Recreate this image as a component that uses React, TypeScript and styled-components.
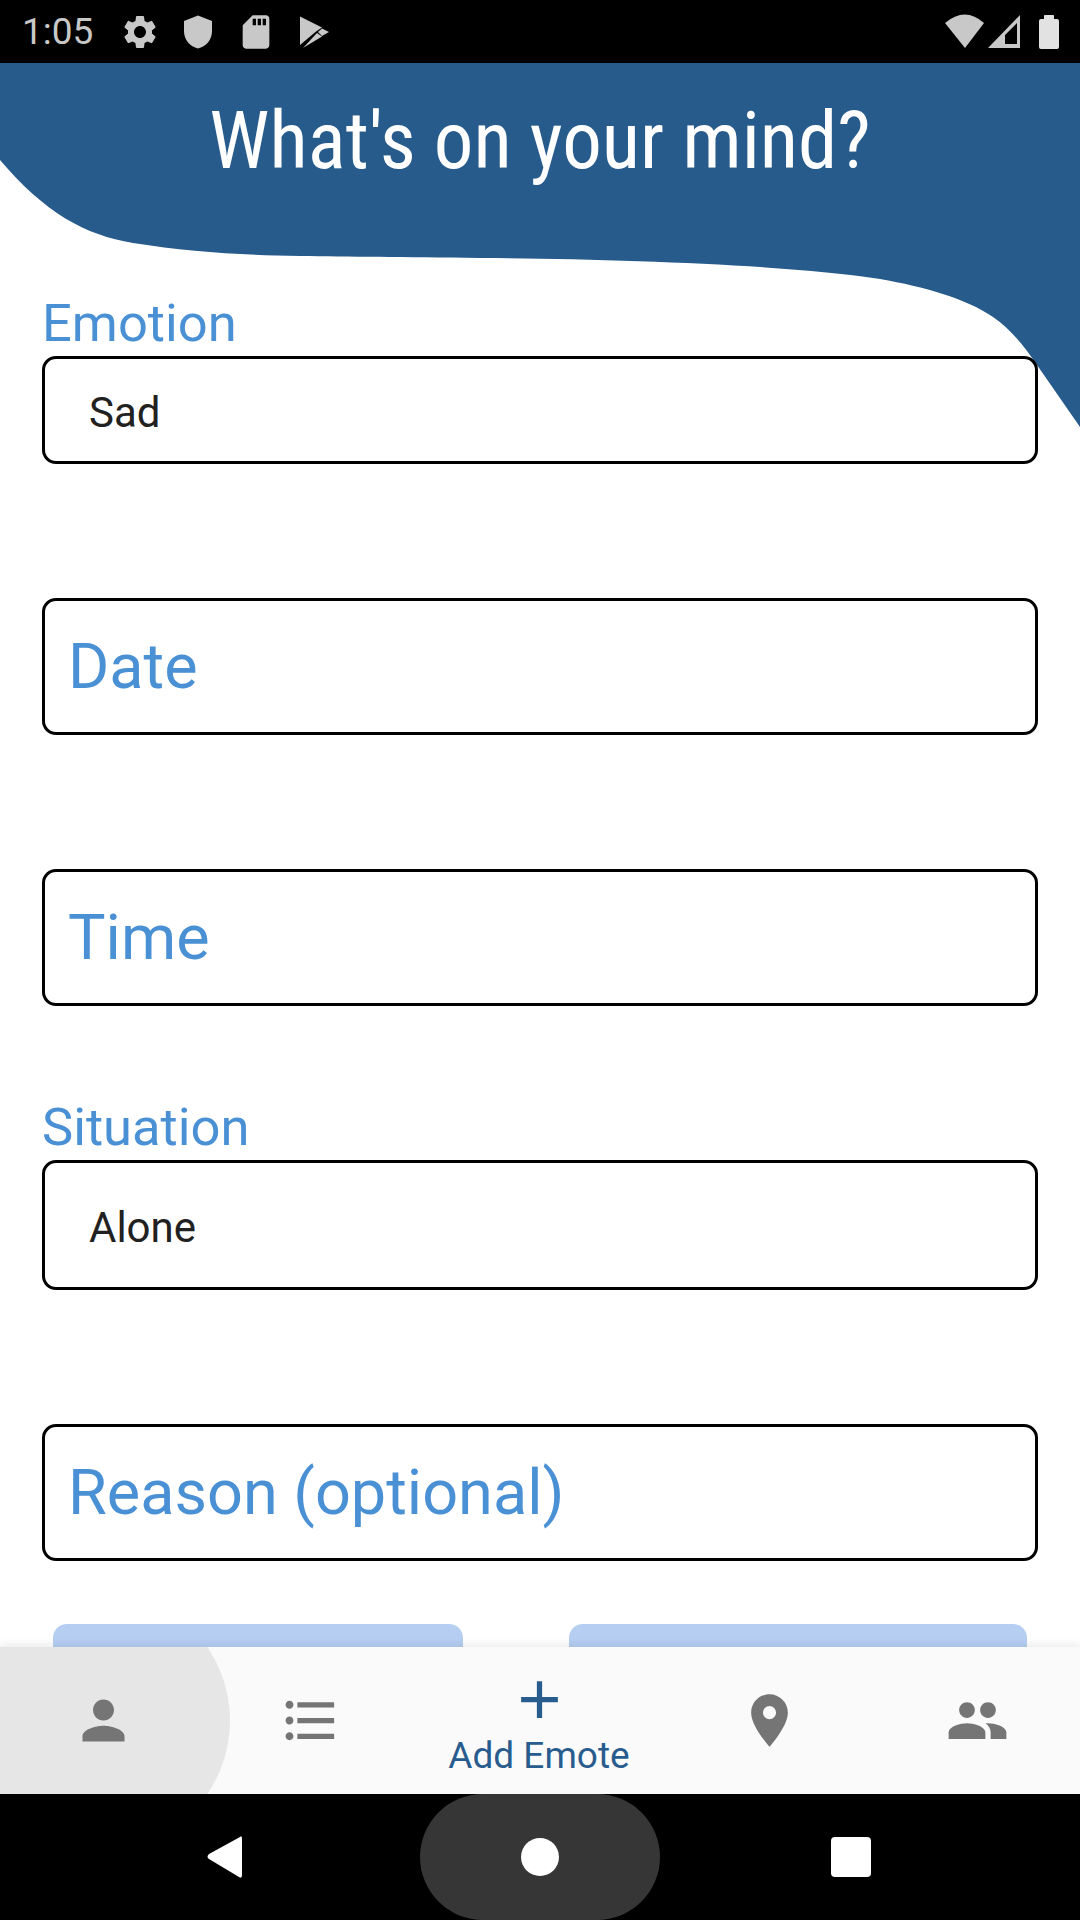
import React from 'react';
import styled, { createGlobalStyle } from 'styled-components';
import { MdAdd, MdFormatListBulleted, MdPeople, MdPerson, MdPlace, MdSdStorage, MdSettings } from 'react-icons/md';

const App: React.FC = () => {
  return (
    <Screen>
      <GlobalStyle />
      <StatusBar>
        <StatusLeft>
          <Clock>1:05</Clock>
          <MdSettings size={40} />
          <svg width="40" height="40" viewBox="0 0 40 40" fill="#c8c8c8">
            <path d="M20 3.5 L34 9 V19 C34 28 28 34.5 20 36.5 C12 34.5 6 28 6 19 V9 Z" />
          </svg>
          <MdSdStorage size={40} />
          <svg width="40" height="40" viewBox="0 0 40 40" fill="#c8c8c8">
            <path d="M6 4.5 L28 15.5 L22 19.5 L6 33 Z" />
            <path d="M28 16.5 L35 20 L28 24 L24 20 Z" />
            <path d="M9 36 L28 24.5 L23 21 Z" />
          </svg>
        </StatusLeft>
        <StatusRight>
          <svg width="115" height="36" viewBox="0 0 115 36">
            <path d="M0 9 Q20 -8 39 9 L20 34 Z" fill="#c8c8c8" />
            <path fillRule="evenodd" d="M43 34 L75 1 V34 Z M60 30 H72 V9 L60 21 Z" fill="#c8c8c8" />
            <path d="M99 1.5 Q99 1 100 1 H108 Q109 1 109 1.5 V5 H112 Q114 5 114 7 V33 Q114 35 112 35 H96 Q94 35 94 33 V7 Q94 5 96 5 H99 Z" fill="#e2e2e2" />
          </svg>
        </StatusRight>
      </StatusBar>

      <Content>
        <Wave viewBox="0 0 1080 370" preserveAspectRatio="none">
          <path d="M0 0 H1080 V364 L1037 302 C1022 280 1010 266 993 254 C965 235 925 224 880 216 C790 202 620 196 480 195 C400 194 350 194 300 193 C240 192 190 189 133 180 C85 172 45 150 0 97 Z" fill="#275b8c" />
        </Wave>
        <Title>What's on your mind?</Title>
        <Form>
          <Field>
            <Label>Emotion</Label>
            <Box $height={108}>
              <Value>Sad</Value>
            </Box>
          </Field>
          <Field>
            <Box $height={137}>
              <Placeholder>Date</Placeholder>
            </Box>
          </Field>
          <Field>
            <Box $height={137}>
              <Placeholder>Time</Placeholder>
            </Box>
          </Field>
          <Field>
            <Label>Situation</Label>
            <Box $height={130}>
              <Value>Alone</Value>
            </Box>
          </Field>
          <Field>
            <Box $height={137}>
              <Placeholder>Reason (optional)</Placeholder>
            </Box>
          </Field>
          <ButtonRow>
            <ActionButton $width={410} />
            <ActionButton $width={458} />
          </ButtonRow>
        </Form>
      </Content>

      <BottomNav>
        <Ripple />
        <Tab><MdPerson size={63} /></Tab>
        <Tab><MdFormatListBulleted size={63} /></Tab>
        <ActiveTab>
          <MdAdd size={63} />
          <TabLabel>Add Emote</TabLabel>
        </ActiveTab>
        <Tab><MdPlace size={63} /></Tab>
        <Tab><MdPeople size={63} /></Tab>
      </BottomNav>

      <SystemNav>
        <BackSlot>
          <svg width="40" height="44" viewBox="0 0 40 44">
            <path d="M35 2 Q37 0 37 4 V40 Q37 44 34 42 L4 24 Q1 22 4 19 Z" fill="#fff" />
          </svg>
        </BackSlot>
        <HomePill>
          <HomeDot />
        </HomePill>
        <RecentSlot>
          <RecentSquare />
        </RecentSlot>
      </SystemNav>
    </Screen>
  );
};

const GlobalStyle = createGlobalStyle`
  html, body {
    margin: 0;
    padding: 0;
    background: #fff;
  }
`;

const Screen = styled.div`
  display: flex;
  flex-direction: column;
  width: 1080px;
  height: 1920px;
  overflow: hidden;
  font-family: Roboto, "Liberation Sans", sans-serif;
`;

const StatusBar = styled.div`
  display: flex;
  justify-content: space-between;
  align-items: center;
  flex: 0 0 63px;
  background: #000;
  color: #c8c8c8;
`;

const StatusLeft = styled.div`
  display: flex;
  align-items: center;
  gap: 18px;
  padding-left: 22px;
`;

const Clock = styled.span`
  width: 80px;
  font-size: 37px;
`;

const StatusRight = styled.div`
  display: flex;
  align-items: center;
  padding-right: 20px;
`;

const Content = styled.div`
  position: relative;
  flex: 1;
  overflow: hidden;
`;

const Wave = styled.svg`
  position: absolute;
  top: 0;
  left: 0;
  width: 1080px;
  height: 370px;
`;

const Title = styled.h1`
  position: relative;
  margin: 28px 0 0;
  color: #fff;
  font-family: "Roboto Condensed", Roboto, sans-serif;
  font-size: 79px;
  font-weight: 400;
  font-stretch: 75%;
  line-height: 100px;
  text-align: center;
`;

const Form = styled.div`
  position: relative;
  display: flex;
  flex-direction: column;
  gap: 134px;
  margin-top: 102px;
  padding: 0 42px;
`;

const Field = styled.div`
  display: flex;
  flex-direction: column;
  gap: 3px;
  &:nth-child(4) {
    margin-top: -43px;
  }
`;

const Label = styled.div`
  color: #4a90d4;
  font-size: 52.5px;
  line-height: 60px;
`;

const Box = styled.div<{ $height: number }>`
  display: flex;
  align-items: center;
  box-sizing: border-box;
  width: 996px;
  height: ${(p) => p.$height}px;
  border: 3px solid #000;
  border-radius: 14px;
  background: #fff;
`;

const Value = styled.span`
  padding: 4px 0 0 44px;
  color: #212121;
  font-size: 42px;
`;

const Placeholder = styled.span`
  padding-left: 23px;
  color: #4a90d4;
  font-size: 63px;
`;

const ButtonRow = styled.div`
  display: flex;
  justify-content: space-between;
  margin-top: -71px;
  padding: 0 11px;
`;

const ActionButton = styled.div<{ $width: number }>`
  width: ${(p) => p.$width}px;
  height: 110px;
  border-radius: 14px;
  background: #b5cef2;
`;

const BottomNav = styled.div`
  position: relative;
  display: grid;
  grid-template-columns: 206px 208px 250px 210px 206px;
  flex: 0 0 147px;
  overflow: hidden;
  background: #fafafa;
  box-shadow: 0 -3px 8px rgba(0, 0, 0, 0.08);
  z-index: 1;
`;

const Ripple = styled.div`
  position: absolute;
  left: -31px;
  top: -57px;
  width: 261px;
  height: 261px;
  border-radius: 50%;
  background: #e6e6e6;
`;

const Tab = styled.div`
  position: relative;
  display: flex;
  justify-content: center;
  align-items: center;
  color: #757575;
`;

const ActiveTab = styled(Tab)`
  flex-direction: column;
  justify-content: flex-start;
  color: #295c8e;
  padding-top: 21px;
`;

const TabLabel = styled.span`
  margin-top: 4px;
  font-size: 37px;
  line-height: 42px;
`;

const SystemNav = styled.div`
  display: flex;
  flex: 0 0 126px;
  background: #000;
`;

const BackSlot = styled.div`
  display: flex;
  justify-content: flex-end;
  align-items: center;
  width: 245px;
`;

const HomePill = styled.div`
  display: flex;
  justify-content: center;
  align-items: center;
  width: 240px;
  margin-left: 175px;
  border-radius: 63px;
  background: #363636;
`;

const HomeDot = styled.div`
  width: 38px;
  height: 38px;
  border-radius: 50%;
  background: #fff;
`;

const RecentSlot = styled.div`
  display: flex;
  align-items: center;
  padding-left: 171px;
`;

const RecentSquare = styled.div`
  width: 40px;
  height: 40px;
  border-radius: 4px;
  background: #fff;
`;

export default App;
